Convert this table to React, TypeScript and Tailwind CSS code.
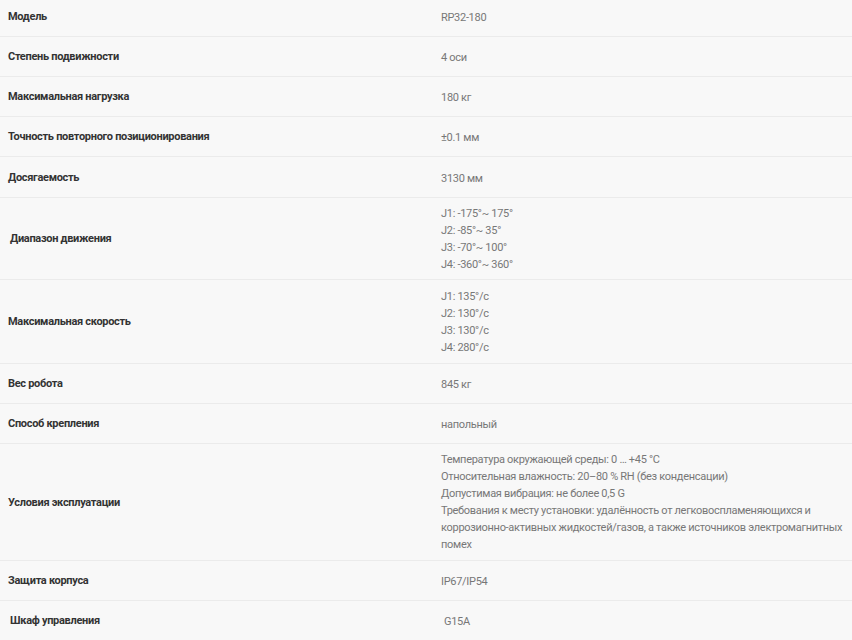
import React from "react";

type Row = { label: string; value: string[]; h: string; indent?: boolean; valIndent?: boolean };

const rows: Row[] = [
  { label: "Модель", value: ["RP32-180"], h: "h-[40px]" },
  { label: "Степень подвижности", value: ["4 оси"], h: "h-[40px]" },
  { label: "Максимальная нагрузка", value: ["180 кг"], h: "h-[40px]" },
  { label: "Точность повторного позиционирования", value: ["±0.1 мм"], h: "h-[40px]" },
  { label: "Досягаемость", value: ["3130 мм"], h: "h-[41px]" },
  {
    label: "Диапазон движения",
    indent: true,
    h: "h-[82px]",
    value: ["J1: -175°~ 175°", "J2: -85°~ 35°", "J3: -70°~ 100°", "J4: -360°~ 360°"],
  },
  {
    label: "Максимальная скорость",
    h: "h-[84px]",
    value: ["J1: 135°/c", "J2: 130°/c", "J3: 130°/c", "J4: 280°/c"],
  },
  { label: "Вес робота", value: ["845 кг"], h: "h-[40px]" },
  { label: "Способ крепления", value: ["напольный"], h: "h-[40px]" },
  {
    label: "Условия эксплуатации",
    h: "h-[117px]",
    value: [
      "Температура окружающей среды: 0 … +45 °C",
      "Относительная влажность: 20–80 % RH (без конденсации)",
      "Допустимая вибрация: не более 0,5 G",
      "Требования к месту установки: удалённость от легковоспламеняющихся и коррозионно-активных жидкостей/газов, а также источников электромагнитных помех",
    ],
  },
  { label: "Защита корпуса", value: ["IP67/IP54"], h: "h-[40px]" },
  { label: "Шкаф управления", indent: true, valIndent: true, value: ["G15A"], h: "h-[40px]" },
];

export default function App() {
  return (
    <div
      className="w-[852px] h-[640px] overflow-hidden bg-[#f8f8f8] tracking-[-0.3px]"
      style={{ fontFamily: '"Roboto", "Liberation Sans", sans-serif' }}
    >
      <div className="flex flex-col -mt-[3px]">
        {rows.map((r, i) => (
          <div key={i} className={`flex items-center border-b border-[#ebebeb] ${r.h}`}>
            <div
              className={`w-[433px] shrink-0 pt-[2px] pr-2 text-[11px] font-bold text-[#333] ${
                r.indent ? "pl-[10px]" : "pl-[8px]"
              }`}
            >
              {r.label}
            </div>
            <div
              className={`flex-1 pr-[6px] text-[11px] leading-[17px] text-[#777] ${
                r.valIndent ? "pl-[11px]" : "pl-[8px]"
              } ${r.value.length === 1 ? "pt-[2px]" : ""}`}
            >
              {r.value.map((v, j) => (
                <div key={j}>{v}</div>
              ))}
            </div>
          </div>
        ))}
      </div>
    </div>
  );
}
